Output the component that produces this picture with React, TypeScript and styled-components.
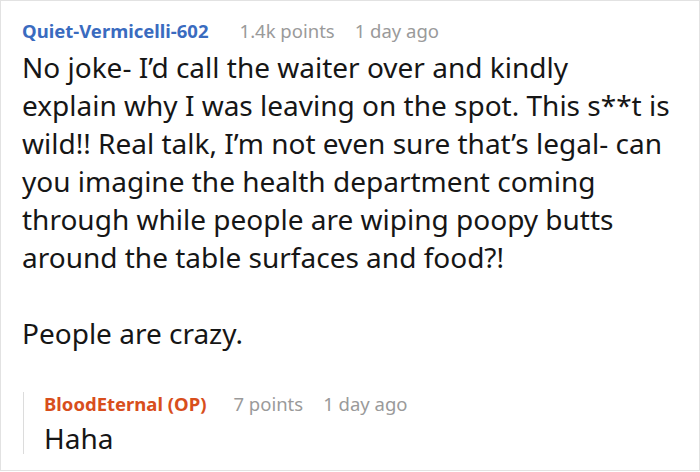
import React from "react";
import styled, { createGlobalStyle } from "styled-components";

const GlobalStyle = createGlobalStyle`
   html, body {
      margin: 0;
      padding: 0;
      background: #fff;
   }
   body {
      font-family: "Noto Sans", "Open Sans", sans-serif;
   }
`;

const Card = styled.article`
   box-sizing: border-box;
   width: 700px;
   height: 471px;
   border: 1px solid #e2e2e2;
   padding: 18px 16px 0 21px;
   background: #fff;
   overflow: hidden;
`;

const Meta = styled.header`
   display: flex;
   align-items: baseline;
   font-size: 18.5px;
   line-height: 24px;
   white-space: nowrap;
`;

const Author = styled.span<{ $op?: boolean }>`
   font-weight: 700;
   color: ${({ $op }) => ($op ? "#d84e1c" : "#3a6bbf")};
   margin-right: ${({ $op }) => ($op ? "27px" : "31px")};
`;

const Info = styled.span`
   color: #9a9a9a;
   margin-right: 20px;
`;

const Body = styled.div`
   margin-top: 5px;
   font-size: 28px;
   line-height: 38px;
   color: #161616;

   p {
      margin: 0;
      white-space: nowrap;
   }

   p + p {
      margin-top: 38px;
   }
`;

const Reply = styled.section`
   margin: 40px 0 0 1px;
   padding-left: 20px;
   border-left: 1px solid #dcdcdc;
`;

const ReplyBody = styled(Body)`
   margin-top: 6px;
   line-height: 32px;
`;

const App: React.FC = () => {
   return (
      <>
         <GlobalStyle />
         <Card>
            <Meta>
               <Author>Quiet-Vermicelli-602</Author>
               <Info>1.4k points</Info>
               <Info>1 day ago</Info>
            </Meta>
            <Body>
               <p>
                  No joke- I’d call the waiter over and kindly
                  <br />
                  explain why I was leaving on the spot. This s**t is
                  <br />
                  wild!! Real talk, I’m not even sure that’s legal- can
                  <br />
                  you imagine the health department coming
                  <br />
                  through while people are wiping poopy butts
                  <br />
                  around the table surfaces and food?!
               </p>
               <p>People are crazy.</p>
            </Body>
            <Reply>
               <Meta>
                  <Author $op>BloodEternal (OP)</Author>
                  <Info>7 points</Info>
                  <Info>1 day ago</Info>
               </Meta>
               <ReplyBody>
                  <p>Haha</p>
               </ReplyBody>
            </Reply>
         </Card>
      </>
   );
};

export default App;
